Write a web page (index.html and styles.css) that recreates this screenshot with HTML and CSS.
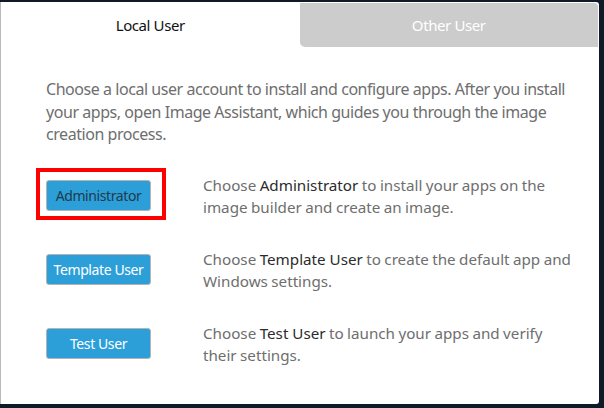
FILE: index.html
```html
<!DOCTYPE html>
<html lang="en">
<head>
<meta charset="utf-8">
<title>Local User</title>
<link rel="stylesheet" href="styles.css">
</head>
<body>
<div class="panel">
  <div class="tabs">
    <div class="tab tab-active">Local User</div>
    <div class="tab tab-inactive">Other User</div>
  </div>
  <div class="content">
    <p class="intro">Choose a local user account to install and configure apps. After you install your apps, open Image Assistant, which guides you through the image creation process.</p>
    <div class="rows">
      <div class="row">
        <div class="btn-cell">
          <button class="btn btn-focus">Administrator</button>
          <span class="highlight"></span>
        </div>
        <p class="desc"><span class="line">Choose <span class="em">Administrator</span> to install your apps on the</span><span class="line">image builder and create an image.</span></p>
      </div>
      <div class="row">
        <div class="btn-cell">
          <button class="btn">Template User</button>
        </div>
        <p class="desc"><span class="line">Choose <span class="em">Template User</span> to create the default app and</span><span class="line">Windows settings.</span></p>
      </div>
      <div class="row">
        <div class="btn-cell">
          <button class="btn">Test User</button>
        </div>
        <p class="desc"><span class="line">Choose <span class="em">Test User</span> to launch your apps and verify</span><span class="line">their settings.</span></p>
      </div>
    </div>
  </div>
</div>
</body>
</html>
```
FILE: styles.css
```css
html, body {
  margin: 0;
  padding: 0;
}
body {
  background: #0f1a26;
  font-family: "Noto Sans", "Open Sans", sans-serif;
  width: 604px;
  height: 408px;
  overflow: hidden;
}
.panel {
  margin-top: 2px;
  width: 599px;
  height: 402px;
  background: #ffffff;
  border-left: 1px solid #b9b9b9;
  box-sizing: border-box;
  border-radius: 0 3px 3px 0;
}
.tabs {
  display: flex;
  height: 45px;
}
.tab {
  flex: 1;
  display: flex;
  align-items: center;
  justify-content: center;
  font-size: 15px;
  letter-spacing: -0.4px;
}
.tab-active {
  color: #111111;
  background: #ffffff;
}
.tab-inactive {
  color: #ffffff;
  background: #cccccc;
  border-radius: 0 4px 0 5px;
  margin-top: 1px;
  margin-right: 1px;
}
.content {
  padding: 31px 10px 0 45px;
}
.intro {
  margin: 0;
  font-size: 16px;
  line-height: 22.5px;
  color: #6e6e6e;
  letter-spacing: -0.45px;
}
.rows {
  margin-top: 28px;
  display: flex;
  flex-direction: column;
  gap: 30px;
}
.row {
  display: flex;
  align-items: center;
  gap: 52px;
}
.btn-cell {
  position: relative;
  width: 105px;
  flex: none;
  display: flex;
}
.btn {
  width: 105px;
  height: 31px;
  padding: 0;
  background: #2d9fd8;
  border: 1px solid #b4b4b4;
  border-radius: 3px;
  color: #ffffff;
  font-family: inherit;
  font-size: 14px;
  letter-spacing: -0.4px;
}
.btn-focus {
  color: #1f3a4c;
}
.highlight {
  position: absolute;
  left: -10px;
  top: -12px;
  width: 122px;
  height: 44px;
  border: 4px solid #ff0000;
}
.desc {
  margin: 0;
  font-size: 15.2px;
  line-height: 22px;
  color: #6e6e6e;
  word-spacing: -0.5px;
}
.line {
  display: block;
  white-space: nowrap;
}
.em {
  color: #2b2b2b;
  word-spacing: 0;
}
```
